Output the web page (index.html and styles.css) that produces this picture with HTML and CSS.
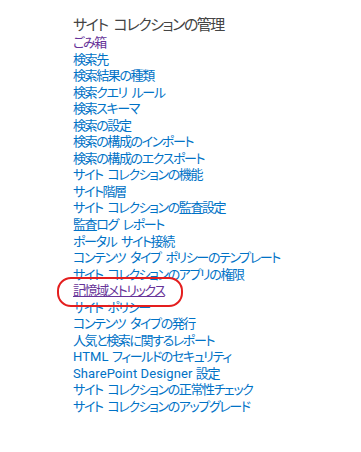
FILE: index.html
```html
<!DOCTYPE html>
<html lang="ja">

<head>
    <meta charset="UTF-8">
    <meta name="viewport" content="width=device-width, initial-scale=1.0">
    <title>サイト コレクションの管理</title>
    <link rel="stylesheet" href="styles.css">
</head>

<body>
    <!-- Site collection administration -->
    <div class="admin-section">
        <h3 class="admin-title">サイト コレクションの管理</h3>
        <ul class="admin-links">
            <li><a href="#" class="visited">ごみ箱</a></li>
            <li><a href="#">検索先</a></li>
            <li><a href="#">検索結果の種類</a></li>
            <li><a href="#">検索クエリ ルール</a></li>
            <li><a href="#">検索スキーマ</a></li>
            <li><a href="#">検索の設定</a></li>
            <li><a href="#">検索の構成のインポート</a></li>
            <li><a href="#">検索の構成のエクスポート</a></li>
            <li><a href="#">サイト コレクションの機能</a></li>
            <li><a href="#">サイト階層</a></li>
            <li><a href="#">サイト コレクションの監査設定</a></li>
            <li><a href="#">監査ログ レポート</a></li>
            <li><a href="#">ポータル サイト接続</a></li>
            <li><a href="#">コンテンツ タイプ ポリシーのテンプレート</a></li>
            <li><a href="#">サイト コレクションのアプリの権限</a></li>
            <li class="marked"><a href="#" class="visited hover">記憶域メトリックス</a><span class="mark"></span></li>
            <li><a href="#">サイト ポリシー</a></li>
            <li><a href="#">コンテンツ タイプの発行</a></li>
            <li><a href="#">人気と検索に関するレポート</a></li>
            <li><a href="#"><span class="latin">HTML </span>フィールドのセキュリティ</a></li>
            <li><a href="#"><span class="latin">SharePoint Designer </span>設定</a></li>
            <li><a href="#">サイト コレクションの正常性チェック</a></li>
            <li><a href="#">サイト コレクションのアップグレード</a></li>
        </ul>
    </div>
</body>

</html>
```

FILE: styles.css
```css
/* styles.css */
body {
    margin: 0;
    padding: 0;
    background-color: #fff;
    font-family: Roboto, "Noto Sans CJK JP", sans-serif;
    font-feature-settings: "palt";
}

.admin-section {
    padding: 16px 0 0 73px;
}

.admin-title {
    margin: 0 0 1px 0;
    font-size: 15px;
    font-weight: normal;
    line-height: 18px;
    letter-spacing: -1.5px;
    word-spacing: 4px;
    color: #444;
}

.admin-links {
    list-style: none;
    margin: 0;
    padding: 0;
}

.admin-links li {
    font-size: 13px;
    line-height: 16.55px;
    letter-spacing: -1.4px;
    word-spacing: 3px;
    white-space: nowrap;
}

.admin-links a {
    color: #0072c6;
    text-decoration: none;
}

.admin-links a.visited {
    color: #663399;
}

.admin-links a.hover {
    text-decoration: underline;
}

.latin {
    letter-spacing: 0.1px;
    word-spacing: 0;
}

.marked {
    position: relative;
}

/* red annotation drawn over the list */
.mark {
    position: absolute;
    left: -16px;
    top: -6px;
    width: 122px;
    height: 26px;
    border: 2.5px solid #e41e1e;
    border-radius: 14px;
}
```
